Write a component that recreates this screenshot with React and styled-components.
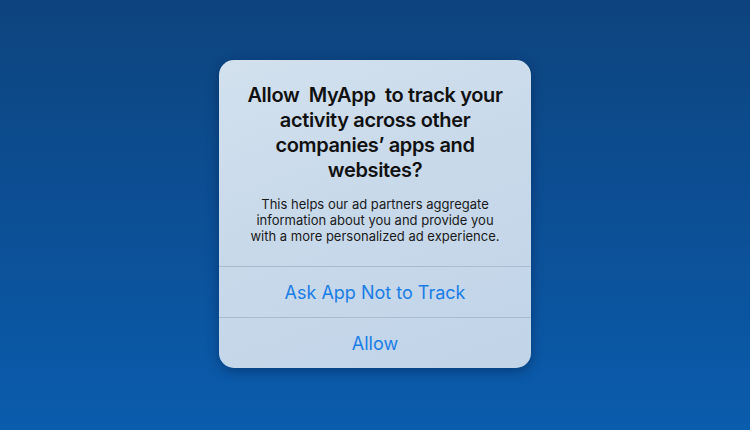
import styled, { createGlobalStyle } from "styled-components";

const GlobalStyle = createGlobalStyle`
    html, body {
        margin: 0;
        padding: 0;
    }
    body {
        font-family: Inter, "Noto Sans", "Liberation Sans", sans-serif;
        -webkit-font-smoothing: antialiased;
    }
`;

const Screen = styled.div`
    width: 750px;
    height: 430px;
    display: flex;
    justify-content: center;
    align-items: flex-start;
    padding-top: 60px;
    box-sizing: border-box;
    background: linear-gradient(180deg, #0d447e 0%, #0c4f95 50%, #0a5cad 100%);
    overflow: hidden;
`;

const Alert = styled.div`
    width: 312px;
    border-radius: 15px;
    background: linear-gradient(160deg, #d3e1ee 0%, #c8d9ea 45%, #c1d4e8 100%);
    box-shadow: 0 3px 12px rgba(0, 20, 60, 0.4);
    overflow: hidden;
    display: flex;
    flex-direction: column;
`;

const Content = styled.div`
    padding: 23px 26px 22px;
    display: flex;
    flex-direction: column;
    align-items: center;
    gap: 13px;
    text-align: center;
    color: #111;
`;

const Title = styled.h2`
    margin: 0;
    font-size: 20px;
    line-height: 25px;
    font-weight: 600;
    letter-spacing: -0.35px;
`;

const Message = styled.p`
    margin: 0;
    font-size: 13px;
    line-height: 16px;
    font-weight: 400;
    color: #1a1a1a;
`;

const Action = styled.button`
    height: 51px;
    border: none;
    border-top: 1px solid #a9bccf;
    background: transparent;
    color: #1a7de6;
    font-family: inherit;
    font-size: 18px;
    font-weight: 400;
    cursor: pointer;
    display: flex;
    align-items: center;
    justify-content: center;
    padding: 0;
`;

export default function App() {
    return (
        <>
            <GlobalStyle />
            <Screen>
                <Alert>
                    <Content>
                        <Title>
                            Allow{"\u00a0"} MyApp{"\u00a0"} to track your activity across other companies’ apps and websites?
                        </Title>
                        <Message>
                            This helps our ad partners aggregate information about you and provide you with a more personalized ad experience.
                        </Message>
                    </Content>
                    <Action>Ask App Not to Track</Action>
                    <Action>Allow</Action>
                </Alert>
            </Screen>
        </>
    );
}
